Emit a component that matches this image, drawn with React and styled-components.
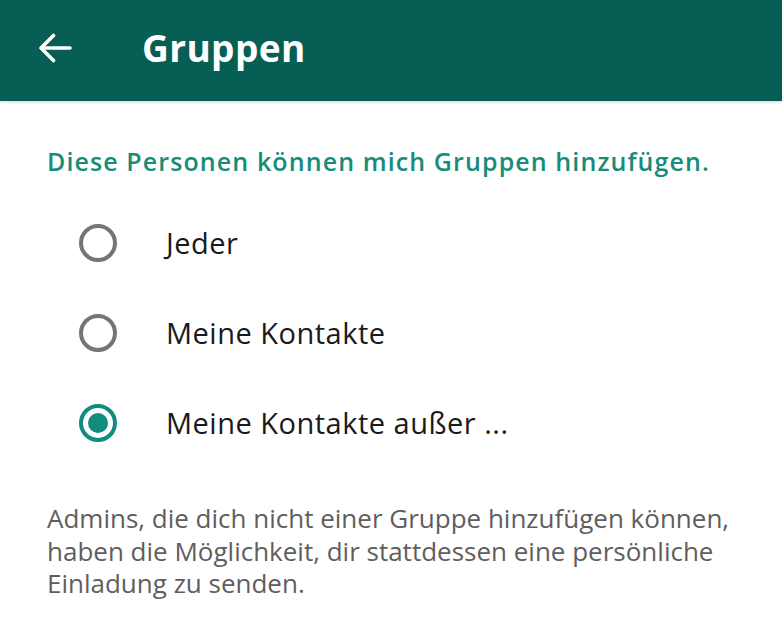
import React, { useState } from "react";
import styled, { createGlobalStyle } from "styled-components";

const GlobalStyle = createGlobalStyle`
  html, body {
    margin: 0;
    padding: 0;
    background: #ffffff;
  }
  body {
    font-family: "Open Sans", "Noto Sans", sans-serif;
  }
`;

const options = ["Jeder", "Meine Kontakte", "Meine Kontakte außer ..."];

export default function App() {
  const [selected, setSelected] = useState(2);
  return (
    <Page>
      <GlobalStyle />
      <Toolbar>
        <BackButton aria-label="Zurück">
          <svg width="34" height="30" viewBox="0 0 34 30" fill="none">
            <path
              d="M32 15H3M15.5 2.5L3 15l12.5 12.5"
              stroke="#ffffff"
              strokeWidth="3.6"
              strokeLinecap="round"
              strokeLinejoin="round"
            />
          </svg>
        </BackButton>
        <Title>Gruppen</Title>
      </Toolbar>

      <Content>
        <SectionTitle>Diese Personen können mich Gruppen hinzufügen.</SectionTitle>
        <OptionList>
          {options.map((label, i) => (
            <OptionRow key={label} onClick={() => setSelected(i)}>
              <Radio $checked={selected === i} />
              <OptionLabel>{label}</OptionLabel>
            </OptionRow>
          ))}
        </OptionList>
        <Hint>
          Admins, die dich nicht einer Gruppe hinzufügen können,
          <br />
          haben die Möglichkeit, dir stattdessen eine persönliche
          <br />
          Einladung zu senden.
        </Hint>
      </Content>
    </Page>
  );
}

const Page = styled.div`
  width: 782px;
  height: 643px;
  overflow: hidden;
  background: #ffffff;
`;

const Toolbar = styled.header`
  height: 101px;
  background: #075e54;
  display: flex;
  align-items: center;
  box-shadow: 0 1px 3px rgba(0, 0, 0, 0.18);
  position: relative;
`;

const BackButton = styled.button`
  border: 0;
  background: none;
  padding: 0;
  margin-left: 38px;
  margin-top: -6px;
  width: 34px;
  height: 30px;
  display: flex;
  cursor: pointer;
`;

const Title = styled.h1`
  margin: -6px 0 0 70px;
  color: #ffffff;
  font-family: "Open Sans", "Noto Sans", sans-serif;
  font-weight: 700;
  font-size: 37px;
  letter-spacing: 0.4px;
`;

const Content = styled.main`
  padding: 41px 0 0 47px;
`;

const SectionTitle = styled.h2`
  margin: 0;
  color: #168c7a;
  font-family: "Open Sans", "Noto Sans", sans-serif;
  font-weight: 600;
  font-size: 25px;
  line-height: 38px;
  letter-spacing: 1.1px;
  white-space: nowrap;
`;

const OptionList = styled.div`
  display: flex;
  flex-direction: column;
  margin-top: 18px;
`;

const OptionRow = styled.label`
  display: flex;
  align-items: center;
  height: 90px;
  cursor: pointer;
`;

const Radio = styled.span`
  box-sizing: border-box;
  width: 38px;
  height: 38px;
  margin-left: 32px;
  border-radius: 50%;
  border: 4px solid ${(p) => (p.$checked ? "#128c7e" : "#757575")};
  display: flex;
  align-items: center;
  justify-content: center;
  flex-shrink: 0;
  &::after {
    content: "";
    width: 20px;
    height: 20px;
    border-radius: 50%;
    background: #128c7e;
    display: ${(p) => (p.$checked ? "block" : "none")};
  }
`;

const OptionLabel = styled.span`
  margin-left: 49px;
  margin-top: -2px;
  color: #1a1a1a;
  font-family: "Open Sans", "Noto Sans", sans-serif;
  font-size: 29px;
  letter-spacing: 0.5px;
`;

const Hint = styled.p`
  margin: 34px 0 0;
  color: #5e5e5e;
  font-family: "Open Sans", "Noto Sans", sans-serif;
  font-size: 26px;
  line-height: 32.5px;
  letter-spacing: 0;
  white-space: nowrap;
`;
